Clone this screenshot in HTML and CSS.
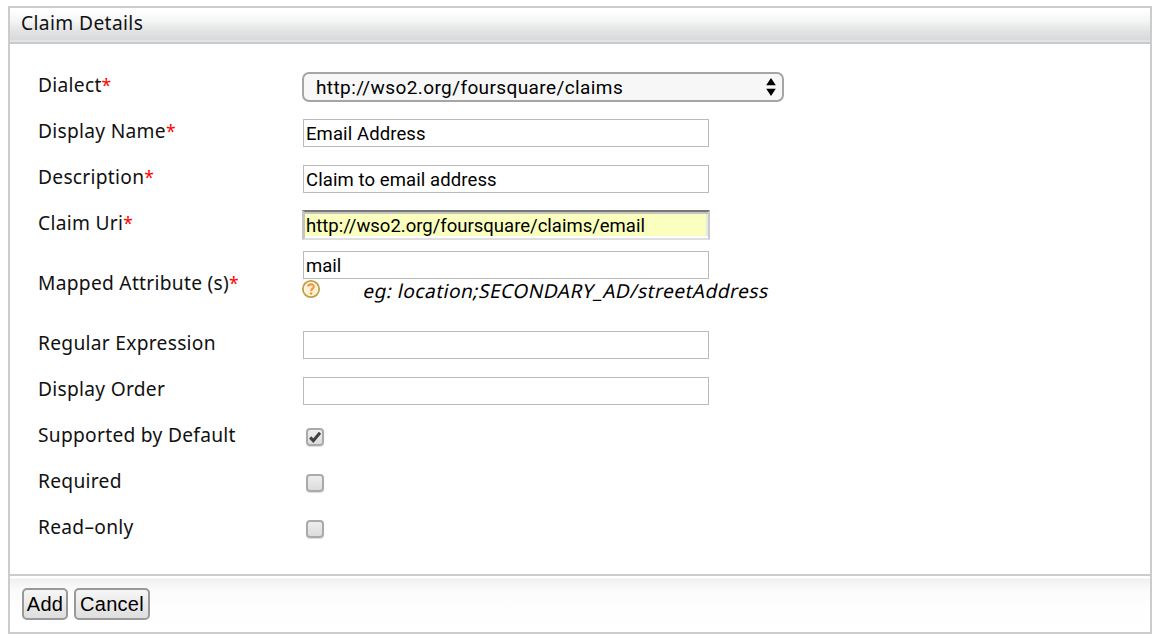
FILE: index.html
```
<!DOCTYPE html>
<html lang="en">
<head>
<meta charset="utf-8">
<title>Claim Details</title>
<link rel="stylesheet" href="styles.css">
</head>
<body>
<main class="panel">
  <header class="panel-head"><span class="title">Claim Details</span></header>
  <section class="form">
    <div class="row">
      <div class="label">Dialect<span class="req">*</span></div>
      <div class="field"><div class="select"><span class="value">http://wso2.org/foursquare/claims</span>
        <svg class="arrows" width="10" height="18" viewBox="0 0 10 18"><path d="M5 0L9.8 7.3H.2zM5 18L9.8 10.7H.2z"/></svg></div></div>
    </div>
    <div class="row">
      <div class="label">Display Name<span class="req">*</span></div>
      <div class="field"><div class="input"><span class="typed">Email Address</span></div></div>
    </div>
    <div class="row">
      <div class="label">Description<span class="req">*</span></div>
      <div class="field"><div class="input"><span class="typed">Claim to email address</span></div></div>
    </div>
    <div class="row">
      <div class="label">Claim Uri<span class="req">*</span></div>
      <div class="field"><div class="input autofill"><span>http://wso2.org/foursquare/claims/email</span></div></div>
    </div>
    <div class="row mapped">
      <div class="label">Mapped Attribute (s)<span class="req">*</span></div>
      <div class="field">
        <div class="input"><span>mail</span></div>
        <div class="hint">
          <svg class="help" width="20" height="20" viewBox="0 0 20 20"><circle cx="10" cy="10" r="8.1" fill="#fff0d2" stroke="#c0a04c" stroke-width="1.9"/><circle cx="10" cy="10" r="6.7" fill="none" stroke="#fffdf0" stroke-width=".8"/><path d="M7.2 7.5C7.3 4.7 12.9 4.6 12.8 7.7C12.7 9.6 10.1 9.7 10.1 12" fill="none" stroke="#f79440" stroke-width="2.1"/><circle cx="10.1" cy="14.4" r="1.25" fill="#f79440"/></svg>
          <span class="example">eg: location;SECONDARY_AD/streetAddress</span>
        </div>
      </div>
    </div>
    <div class="row">
      <div class="label">Regular Expression</div>
      <div class="field"><div class="input"></div></div>
    </div>
    <div class="row">
      <div class="label">Display Order</div>
      <div class="field"><div class="input"></div></div>
    </div>
    <div class="row">
      <div class="label">Supported by Default</div>
      <div class="field"><div class="check"><svg width="14" height="14" viewBox="0 0 14 14"><path d="M2.2 7.4L5.3 10.7L12 2.8" fill="none" stroke="#404040" stroke-width="3"/></svg></div></div>
    </div>
    <div class="row">
      <div class="label">Required</div>
      <div class="field"><div class="check"></div></div>
    </div>
    <div class="row">
      <div class="label">Read–only</div>
      <div class="field"><div class="check"></div></div>
    </div>
  </section>
  <footer class="actions">
    <div class="button add"><span>Add</span></div>
    <div class="button cancel"><span>Cancel</span></div>
  </footer>
</main>
</body>
</html>
```
FILE: styles.css
```
* { box-sizing: border-box; }
body { margin: 0; padding: 6px 8px 0; background: #fff; color: #111; font-family: "Noto Sans", "Open Sans", sans-serif; font-size: 18.5px; }
.panel { width: 1144px; height: 628px; border: 2px solid #ccc; display: flex; flex-direction: column; background: #fff; }
.panel-head { height: 36px; padding: 0 0 5px 11px; border-bottom: 2px solid #c9cacb; background: linear-gradient(#fff 5%, #f4f5f5 38%, #e0e2e3 70%, #d9dadd 94%, #e3e4e8 95%); display: flex; align-items: center; }
.title { font-size: 19.2px; line-height: 26px; letter-spacing: .38px; }
.form { height: 530px; padding-top: 18px; }
.row { height: 46px; display: grid; grid-template-columns: 264px 1fr; padding-left: 28px; align-items: center; white-space: nowrap; }
.row.mapped { height: 74px; }
.label { font-size: 19.2px; line-height: 26px; letter-spacing: .28px; }
.req { color: #f00; font-size: 17.5px; letter-spacing: 0; }
.field { padding: 4px 0 0 1px; font-family: Roboto, sans-serif; color: #000; }
.input { width: 406px; height: 28px; border: 1px solid #bababa; padding: 1px 0 0 2px; line-height: 27px; background: #fff; }
.typed { letter-spacing: .1px; }
.autofill { width: 408px; height: 30px; margin-left: -1px; padding: 1px 0 0 1px; border: 2px solid #cacaca; border-top-color: #777; border-left: 3px solid #c4c4c4; border-bottom-color: #dedede; background: #faffbd; box-shadow: inset 0 2px #c5c5bd, inset 0 -2px #fff, inset -2px 0 #e8e8e8; }
.select { display: flex; align-items: center; justify-content: space-between; width: 482px; height: 30px; margin-left: -1px; padding: 0 6px 0 12px; border: 2px solid #a5a5a5; border-radius: 7px; background: #f7f7f7; font-size: 19px; letter-spacing: .4px; }
.mapped .field { align-self: start; padding-top: 5px; }
.hint { display: flex; height: 22px; margin-left: -2px; }
.help { flex: none; }
.example { margin-left: 43px; font-size: 19.2px; line-height: 24px; font-family: "Noto Sans", sans-serif; letter-spacing: .45px; transform: skewX(-12deg); }
.check { width: 18px; height: 18px; margin-left: 3px; border: 2px solid #aaa; border-radius: 4px; background: linear-gradient(#eee, #dcdcdc); box-shadow: 0 1px 1px #ddd; }
.check svg { display: block; }
.actions { height: 58px; border-top: 2px solid #ccc; padding: 12px 0 0 12px; display: flex; gap: 6px; background: linear-gradient(#fff 0, #fff 2px, #f0f0f0 3px, #fbfbfb 14px, #fefefe 36px, #fff); }
.button { height: 32px; border: 2px solid #999; border-radius: 5px; background: linear-gradient(#f6f6f6, #dedede); font: 20px/29px "Liberation Sans", Arial, sans-serif; color: #000; text-align: center; }
.add { width: 46px; letter-spacing: .3px; }
.cancel { width: 76px; letter-spacing: .3px; }
```
